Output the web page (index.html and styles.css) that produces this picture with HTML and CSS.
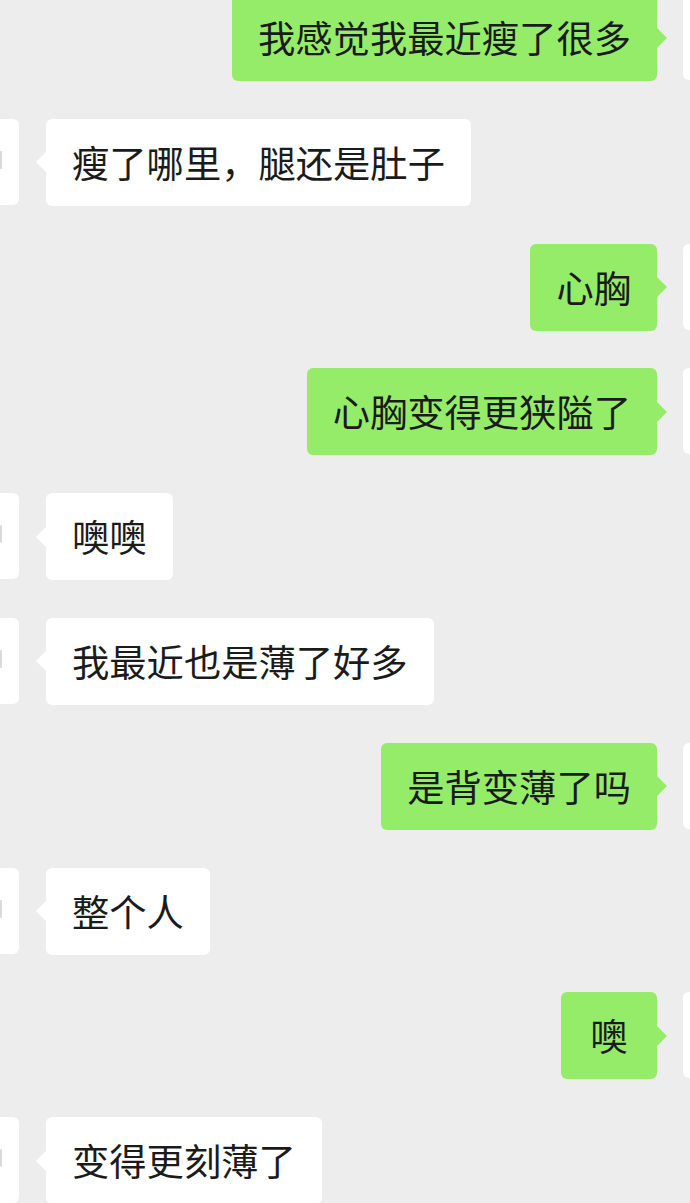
FILE: index.html
```html
<!DOCTYPE html>
<html lang="zh-CN">
<head>
  <meta charset="UTF-8" />
  <meta name="viewport" content="width=device-width, initial-scale=1" />
  <title>聊天</title>
  <link rel="stylesheet" href="styles.css">
</head>
<body>
  <div class="chat">
    <div class="row me"><div class="bubble">我感觉我最近瘦了很多</div><div class="avatar"></div></div>
    <div class="row them"><div class="avatar"></div><div class="bubble">瘦了哪里，腿还是肚子</div></div>
    <div class="row me"><div class="bubble">心胸</div><div class="avatar"></div></div>
    <div class="row me"><div class="bubble">心胸变得更狭隘了</div><div class="avatar"></div></div>
    <div class="row them"><div class="avatar"></div><div class="bubble">噢噢</div></div>
    <div class="row them"><div class="avatar"></div><div class="bubble">我最近也是薄了好多</div></div>
    <div class="row me"><div class="bubble">是背变薄了吗</div><div class="avatar"></div></div>
    <div class="row them"><div class="avatar"></div><div class="bubble">整个人</div></div>
    <div class="row me"><div class="bubble">噢</div><div class="avatar"></div></div>
    <div class="row them"><div class="avatar"></div><div class="bubble">变得更刻薄了</div></div>
  </div>
</body>
</html>
```

FILE: styles.css
```css
body,html{margin:0;padding:0;background:#ededed;overflow:hidden;height:100%;}
body{font-family:"Noto Sans CJK SC","Noto Sans",sans-serif;color:#1b1b1b;}
.chat{display:flex;flex-direction:column;gap:37.8px;margin-top:-6px;width:690px;}
.row{display:flex;align-items:flex-start;}
.row.me{justify-content:flex-end;}
.avatar{flex:none;height:86px;background:#fff;position:relative;}
.them .avatar{width:19px;margin-right:27px;border-radius:0 6px 6px 0;}
.them .avatar::after{content:"";position:absolute;left:0;top:32px;width:2px;height:18px;border-radius:1px;background:#dadada;}
.me .avatar{width:7px;margin-left:26px;border-radius:6px 0 0 6px;}
.bubble{position:relative;height:87px;line-height:87px;padding:0 26px;font-size:37.3px;border-radius:6px;min-width:44px;text-align:center;white-space:nowrap;}
.me .bubble{background:#95ec69;}
.them .bubble{background:#fff;}
.bubble::before{content:"";position:absolute;top:50%;margin-top:-10px;border-top:10px solid transparent;border-bottom:10px solid transparent;}
.me .bubble::before{right:-10px;border-left:10px solid #95ec69;}
.them .bubble::before{left:-10px;border-right:10px solid #fff;}
```
